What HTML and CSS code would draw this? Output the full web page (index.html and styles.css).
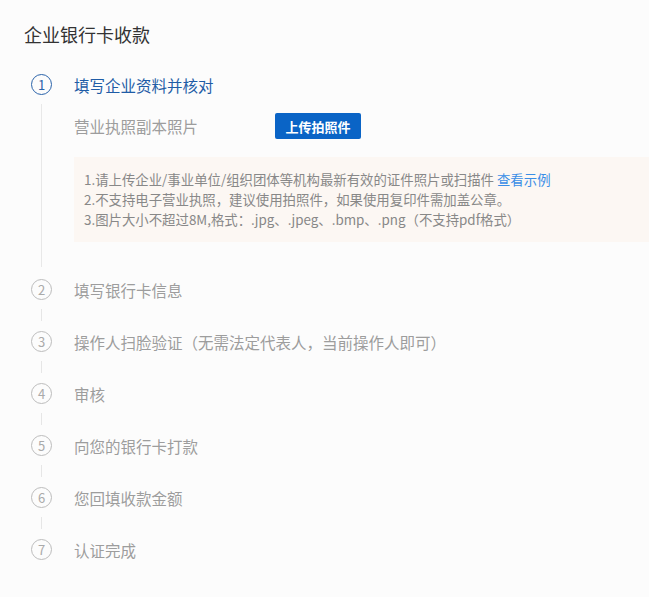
FILE: index.html
```html
<!DOCTYPE html>
<html lang="zh-CN">
<head>
  <meta charset="UTF-8">
  <meta name="viewport" content="width=device-width, initial-scale=1.0">
  <title>企业银行卡收款</title>
  <link rel="stylesheet" href="styles.css">
</head>
<body>
  <div class="page">
    <h1 class="title">企业银行卡收款</h1>

    <div class="steps">
      <div class="step active">
        <div class="step-head">
          <span class="num">1</span>
          <span class="name">填写企业资料并核对</span>
        </div>
        <div class="step-body">
          <div class="upload-row">
            <span class="field">营业执照副本照片</span>
            <button class="upload-btn">上传拍照件</button>
          </div>
          <div class="notice">
            <p>1.请上传企业/事业单位/组织团体等机构最新有效的证件照片或扫描件 <a href="#" class="link">查看示例</a></p>
            <p>2.不支持电子营业执照，建议使用拍照件，如果使用复印件需加盖公章。</p>
            <p>3.图片大小不超过8M,格式：.jpg、.jpeg、.bmp、.png（不支持pdf格式）</p>
          </div>
        </div>
      </div>

      <div class="step">
        <div class="step-head"><span class="num">2</span><span class="name">填写银行卡信息</span></div>
        <div class="link-line"></div>
      </div>
      <div class="step">
        <div class="step-head"><span class="num">3</span><span class="name">操作人扫脸验证（无需法定代表人，当前操作人即可）</span></div>
        <div class="link-line"></div>
      </div>
      <div class="step">
        <div class="step-head"><span class="num">4</span><span class="name">审核</span></div>
        <div class="link-line"></div>
      </div>
      <div class="step">
        <div class="step-head"><span class="num">5</span><span class="name">向您的银行卡打款</span></div>
        <div class="link-line"></div>
      </div>
      <div class="step">
        <div class="step-head"><span class="num">6</span><span class="name">您回填收款金额</span></div>
        <div class="link-line"></div>
      </div>
      <div class="step">
        <div class="step-head"><span class="num">7</span><span class="name">认证完成</span></div>
      </div>
    </div>
  </div>
</body>
</html>
```

FILE: styles.css
```css
body {
  margin: 0;
  padding: 0;
  background: #fcfcfc;
  font-family: "Noto Sans CJK SC", "Noto Sans", sans-serif;
  color: #333;
}
.page {
  padding: 22px 0 0 24px;
}
.title {
  margin: 0;
  font-size: 18px;
  font-weight: normal;
  line-height: 24px;
  color: #333;
}
.steps {
  margin-top: 28px;
  padding-left: 7px;
}
.step-head {
  display: flex;
  align-items: center;
  height: 21px;
}
.num {
  box-sizing: border-box;
  width: 21px;
  height: 21px;
  border: 1px solid #bcbcbc;
  border-radius: 50%;
  display: flex;
  justify-content: center;
  align-items: center;
  font-size: 13px;
  color: #aaa;
  flex-shrink: 0;
}
.name {
  margin-left: 22px;
  font-size: 15.5px;
  color: #9d9d9d;
  white-space: nowrap;
}
.active .num {
  border-color: #2a63aa;
  color: #2a63aa;
}
.active .name {
  color: #1f5ca6;
}
.step-body {
  margin: 9px 0 12px 10px;
  border-left: 1px solid #e8e8e8;
  padding: 9px 0 25px 32px;
}
.upload-row {
  display: flex;
  align-items: center;
}
.field {
  width: 201px;
  font-size: 15.5px;
  color: #9d9d9d;
}
.upload-btn {
  width: 86px;
  height: 26px;
  padding: 0;
  border: none;
  border-radius: 2px;
  background: #0a64c6;
  color: #fff;
  font-family: inherit;
  font-size: 13px;
  font-weight: bold;
  cursor: pointer;
}
.notice {
  margin-top: 18px;
  background: #fcf7f3;
  padding: 12px 0 13px 10px;
  font-size: 13.4px;
  line-height: 20px;
  color: #888;
}
.notice p {
  margin: 0;
  white-space: nowrap;
}
.link {
  color: #3a8ee6;
  text-decoration: none;
}
.link-line {
  width: 1px;
  height: 12px;
  margin: 9px 0 10px 10px;
  background: #e6e6e6;
}
```
